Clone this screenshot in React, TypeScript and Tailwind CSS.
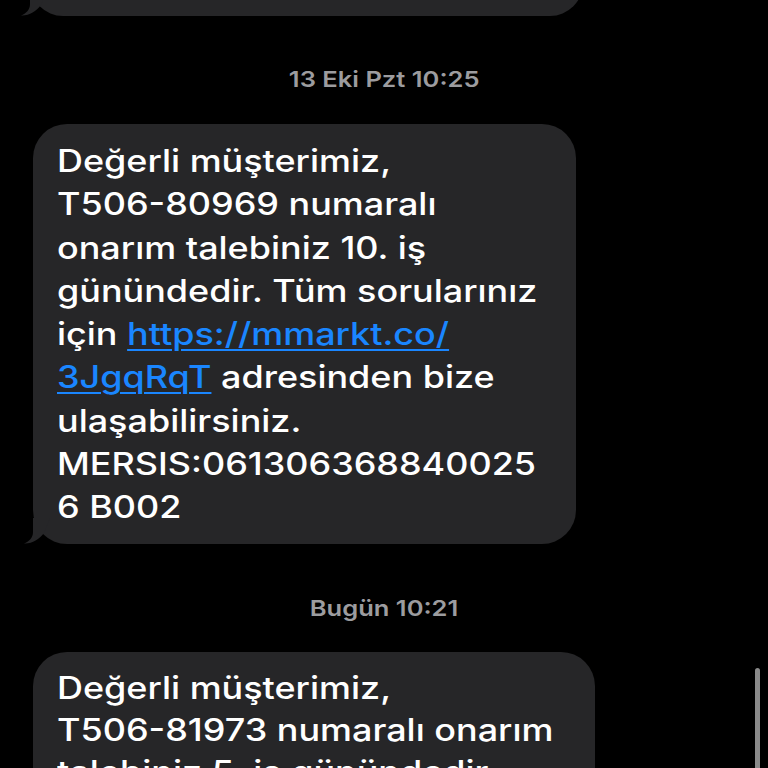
import React from "react";

const font = { fontFamily: "Inter, 'Noto Sans', 'Liberation Sans', sans-serif" };

function Tail() {
  return (
    <svg
      className="absolute -left-[9px] bottom-0"
      width="26"
      height="26"
      viewBox="0 0 26 26"
    >
      <path d="M9 0 L9 14 C9 20 5 23.5 0 25.5 C8 26 15 21.5 20 15 L26 0 Z" fill="#262628" />
    </svg>
  );
}

function Stamp({ day, time }: { day: string; time: string }) {
  return (
    <div className="flex justify-center">
      <div className="origin-center scale-x-[1.16] text-[22px] leading-[28px] font-semibold text-[#9c9c9f]">
        {day} {time}
      </div>
    </div>
  );
}

function Link({ children }: { children: React.ReactNode }) {
  return <span className="text-[#1a86ff] underline decoration-2 underline-offset-[4px]">{children}</span>;
}

function Lines({ children }: { children: React.ReactNode }) {
  return (
    <div className="origin-left scale-x-[1.16] whitespace-nowrap text-[31px] font-medium">
      {children}
    </div>
  );
}

export default function App() {
  const second = [
    "Değerli müşterimiz,",
    "T506-80969 numaralı",
    "onarım talebiniz 10. iş",
    "günündedir. Tüm sorularınız",
  ];
  const third = [
    "Değerli müşterimiz,",
    "T506-81973 numaralı onarım",
    "talebiniz 5. iş günündedir.",
    "Tüm sorularınız için",
  ];

  return (
    <div className="relative h-[768px] w-[768px] overflow-hidden bg-black text-white" style={font}>
      {/* previous message, cut at the top */}
      <div className="relative -mt-[50px] ml-[30px] h-[66px] w-[553px] rounded-[34px] bg-[#262628]">
        <Tail />
      </div>

      <div className="mt-[49px] mb-[31px]">
        <Stamp day="13 Eki Pzt" time="10:25" />
      </div>

      <div className="relative ml-[33px] w-[543px] rounded-[34px] bg-[#262628] px-[24px] py-[15px] leading-[43.3px]">
        <Lines>
          {second.map((l) => (
            <div key={l}>{l}</div>
          ))}
          <div>
            için <Link>https://mmarkt.co/</Link>
          </div>
          <div>
            <Link>3JgqRqT</Link> adresinden bize
          </div>
          <div>ulaşabilirsiniz.</div>
          <div>MERSIS:061306368840025</div>
          <div>6 B002</div>
        </Lines>
        <Tail />
      </div>

      <div className="mt-[50px] mb-[30px]">
        <Stamp day="Bugün" time="10:21" />
      </div>

      <div className="relative ml-[33px] w-[562px] rounded-[34px] bg-[#262628] px-[24px] py-[15px] leading-[42px]">
        <Lines>
          {third.map((l) => (
            <div key={l}>{l}</div>
          ))}
        </Lines>
      </div>

      {/* scroll indicator */}
      <div className="absolute right-[8px] top-[668px] h-[120px] w-[5px] rounded-full bg-[#8a8a8a]" />
    </div>
  );
}
